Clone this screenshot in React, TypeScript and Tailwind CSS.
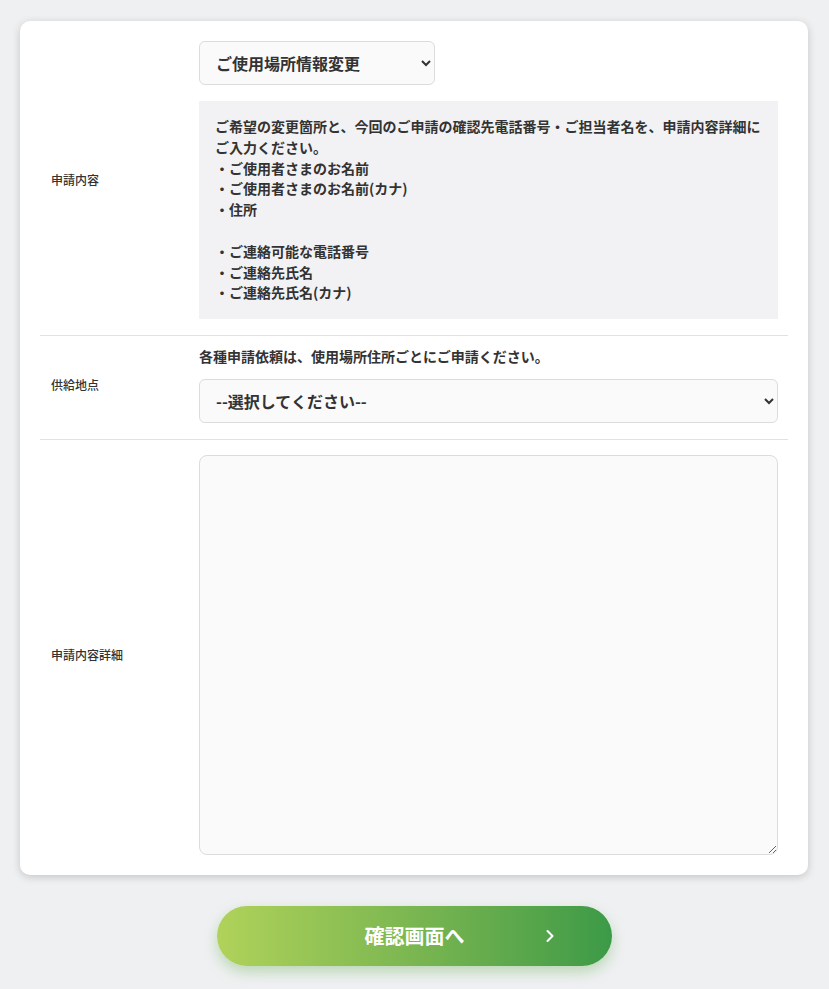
import { ChevronRight } from "lucide-react";

const font = { fontFamily: '"Noto Sans CJK JP", "Noto Sans", sans-serif' };

const notes = [
  "・ご使用者さまのお名前",
  "・ご使用者さまのお名前(カナ)",
  "・住所",
  "",
  "・ご連絡可能な電話番号",
  "・ご連絡先氏名",
  "・ご連絡先氏名(カナ)",
];

function Label({ children }: { children: React.ReactNode }) {
  return (
    <div className="flex w-[159px] shrink-0 items-center pl-[11px] text-[12px] font-medium text-[#333]">
      {children}
    </div>
  );
}

const field =
  "rounded-[6px] border border-[#dcdcdc] bg-[#fafafa] px-[12px] text-[16px] font-bold text-[#333] outline-none";

export default function App() {
  return (
    <div className="min-h-[989px] bg-[#eff0f2] pt-[21px]" style={font}>
      <div className="ml-5 w-[788px] rounded-[10px] bg-white px-5 pt-[4px] pb-[5px] shadow-[0_2px_8px_rgba(0,0,0,0.18)]">
        <div className="flex border-b border-[#e2e2e2] py-4">
          <Label>申請内容</Label>
          <div className="flex-1 pr-[10px]">
            <select defaultValue="change" className={`${field} h-[44px] w-[236px]`}>
              <option value="change">ご使用場所情報変更</option>
            </select>
            <div className="mt-4 bg-[#f2f2f4] px-4 pt-[15px] pb-[16px] text-[14px] leading-[20.8px] font-bold text-[#333]">
              <p>
                ご希望の変更箇所と、今回のご申請の確認先電話番号・ご担当者名を、申請内容詳細にご入力ください。
              </p>
              {notes.map((n, i) => (
                <p key={i} className="min-h-[20.8px]">
                  {n}
                </p>
              ))}
            </div>
          </div>
        </div>

        <div className="flex border-b border-[#e2e2e2] pt-[10px] pb-4">
          <Label>供給地点</Label>
          <div className="flex-1 pr-[10px]">
            <p className="text-[14px] leading-[21px] font-bold text-[#333]">
              各種申請依頼は、使用場所住所ごとにご申請ください。
            </p>
            <select defaultValue="" className={`${field} mt-3 h-[44px] w-full`}>
              <option value="">--選択してください--</option>
            </select>
          </div>
        </div>

        <div className="flex py-[15px]">
          <Label>申請内容詳細</Label>
          <div className="flex-1 pr-[10px]">
            <textarea className="block h-[400px] w-full rounded-[8px] border border-[#dcdcdc] bg-[#fafafa] p-3 text-[14px] outline-none" />
          </div>
        </div>
      </div>

      <div className="flex justify-center pt-[31px]">
        <button
          type="button"
          className="relative flex h-[60px] w-[395px] items-center justify-center rounded-full bg-gradient-to-r from-[#b0d25a] to-[#3b9a47] text-[20px] font-bold text-white shadow-[0_6px_14px_rgba(90,170,70,0.35)]"
        >
          確認画面へ
          <ChevronRight className="absolute right-[52px] h-5 w-5" strokeWidth={2.5} />
        </button>
      </div>
    </div>
  );
}
